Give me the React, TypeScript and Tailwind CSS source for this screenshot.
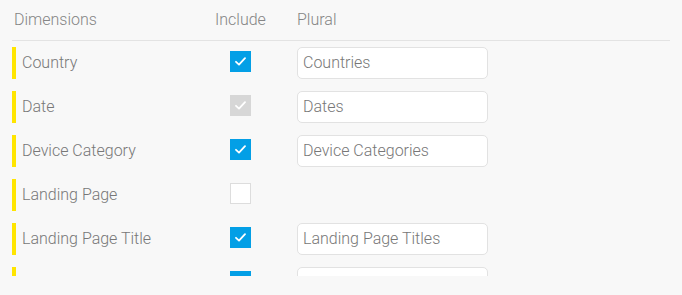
type Row = {
  name: string;
  state: 'on' | 'off' | 'locked';
  plural?: string;
};

// last row is only partly in view, its texts sit below the clip
const rows: Row[] = [
  { name: 'Country', state: 'on', plural: 'Countries' },
  { name: 'Date', state: 'locked', plural: 'Dates' },
  { name: 'Device Category', state: 'on', plural: 'Device Categories' },
  { name: 'Landing Page', state: 'off' },
  { name: 'Landing Page Title', state: 'on', plural: 'Landing Page Titles' },
  { name: '', state: 'on', plural: '' },
];

function Check({ state }: { state: Row['state'] }) {
  if (state === 'off') {
    return <div className="w-[21px] h-[21px] shrink-0 self-start mt-1 bg-white border border-[#dddddd]" />;
  }
  const bg = state === 'on' ? 'bg-[#039fe6]' : 'bg-[#d7d7d7]';
  return (
    <div className={`w-[21px] h-[21px] shrink-0 self-start mt-1 flex items-center justify-center ${bg}`}>
      <svg width="11" height="9" viewBox="0 0 11 9" fill="none">
        <path d="M1 4.8 L4 7.6 L10 1.2" stroke="white" strokeWidth="1.8" strokeLinecap="round" strokeLinejoin="round" />
      </svg>
    </div>
  );
}

export default function App() {
  return (
    <div
      className="w-[682px] h-[295px] bg-[#f8f8f8] pl-3 pr-3 text-[#777777] font-light"
      style={{ fontFamily: 'Roboto, "Liberation Sans", sans-serif' }}
    >
      {/* header */}
      <div className="flex items-end h-[41px] border-b border-[#e3e3e3] pb-3 text-[16px] text-[#858585] w-[658px]">
        <span className="w-[203px] pl-[2px] leading-none">Dimensions</span>
        <span className="w-[82px] leading-none">Include</span>
        <span className="leading-none">Plural</span>
      </div>

      {/* body, clipped like a scroll area */}
      <div className="h-[235px] overflow-hidden pt-[6px] flex flex-col gap-3">
        {rows.map((r, i) => (
          <div key={i} className="flex items-center h-8 shrink-0">
            <div className="w-1 h-8 bg-[#ffe500] shrink-0" />
            <div className="w-[214px] pl-[6px] text-[16px]">{r.name}</div>
            <Check state={r.state} />
            {r.plural !== undefined && (
              <div className="ml-[46px] w-[191px] h-8 bg-white border border-[#e2e2e2] rounded-[5px] flex items-center pl-[5px] text-[16px]">
                {r.plural}
              </div>
            )}
          </div>
        ))}
      </div>
    </div>
  );
}
